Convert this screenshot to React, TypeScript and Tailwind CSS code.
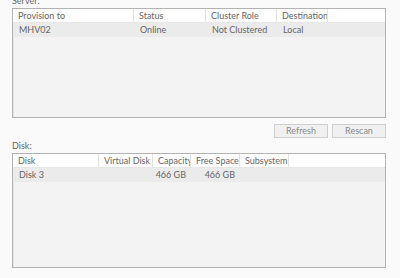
const serverCols = [
  { label: "Provision to", w: 121 },
  { label: "Status", w: 72 },
  { label: "Cluster Role", w: 71 },
  { label: "Destination", w: 51 },
]
const serverRow = ["MHV02", "Online", "Not Clustered", "Local"]

const diskCols = [
  { label: "Disk", w: 86, right: false },
  { label: "Virtual Disk", w: 54, right: false },
  { label: "Capacity", w: 38, right: true },
  { label: "Free Space", w: 49, right: true },
  { label: "Subsystem", w: 49, right: false },
]
const diskRow = ["Disk 3", "", "466 GB", "466 GB", ""]

function Grid({
  cols,
  row,
  height,
}: {
  cols: { label: string; w: number; right?: boolean }[]
  row: string[]
  height: string
}) {
  return (
    <div className={`w-[374px] ${height} border border-[#b3b3b3] bg-[#f3f3f3] shadow-[inset_1px_1px_0_#e4e4e4]`}>
      <div className="flex h-[14px] bg-white border-b border-[#e6e6e6]">
        {cols.map((c) => (
          <div
            key={c.label}
            style={{ width: c.w }}
            className="shrink-0 h-full border-r border-[#e2e2e2] pl-[5px] leading-[14px] whitespace-nowrap overflow-hidden"
          >
            {c.label}
          </div>
        ))}
      </div>
      <div className="flex h-[14px] bg-[#ebebeb]">
        {cols.map((c, i) => (
          <div
            key={c.label}
            style={{ width: c.w }}
            className={`shrink-0 h-full leading-[14px] whitespace-nowrap ${c.right ? "text-right pr-[5px]" : "pl-[6px]"}`}
          >
            {row[i]}
          </div>
        ))}
      </div>
    </div>
  )
}

export default function App() {
  return (
    <div className="w-[400px] h-[278px] overflow-hidden bg-[#fafafa] text-[9px] text-[#666666] font-['Lato',sans-serif]">
      <div className="flex flex-col pl-[12px]">
        <div className="h-[8px] leading-[10px] -mt-[4px] pb-[4px] box-content">Server:</div>
        <Grid cols={serverCols} row={serverRow} height="h-[110px]" />
        <div className="flex justify-end gap-[4px] w-[374px] mt-[6px]">
          <button className="w-[54px] h-[14px] border border-[#cfcfcf] bg-[#f0f0f0] text-[#8a8a8a] leading-[12px]">
            Refresh
          </button>
          <button className="w-[54px] h-[14px] border border-[#cfcfcf] bg-[#f0f0f0] text-[#8a8a8a] leading-[12px]">
            Rescan
          </button>
        </div>
        <div className="h-[14px] leading-[14px] mt-[1px]">Disk:</div>
        <Grid cols={diskCols} row={diskRow} height="h-[115px]" />
      </div>
    </div>
  )
}
